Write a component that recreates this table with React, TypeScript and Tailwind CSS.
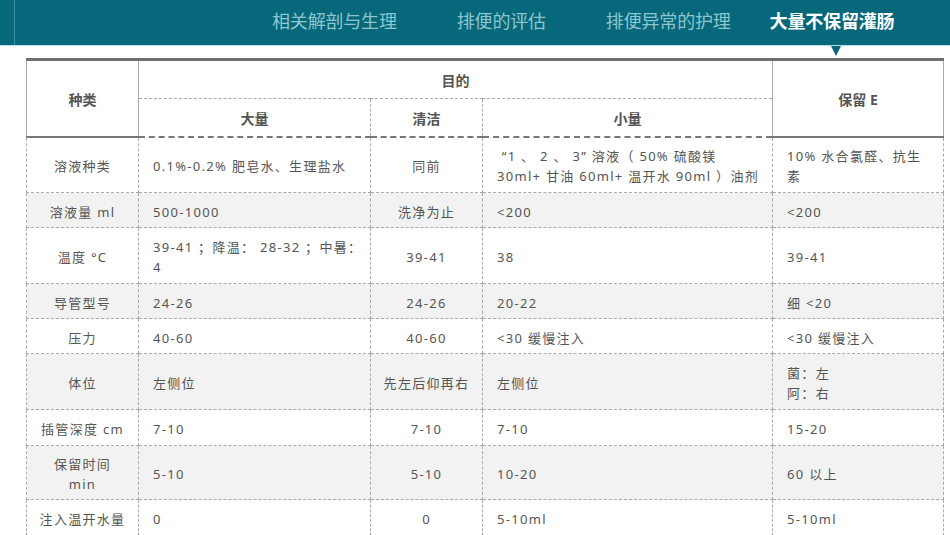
import React from 'react';

const font = { fontFamily: '"Noto Sans", "Noto Sans CJK SC", sans-serif' };

const navItems = [
  { label: '相关解剖与生理', active: false, cls: 'ml-[272px]' },
  { label: '排便的评估', active: false, cls: 'ml-[60px]' },
  { label: '排便异常的护理', active: false, cls: 'ml-[60px]' },
  { label: '大量不保留灌肠', active: true, cls: 'ml-[39px]' },
];

type Row = {
  name: React.ReactNode;
  big: React.ReactNode;
  clean: React.ReactNode;
  small: React.ReactNode;
  keep: React.ReactNode;
  h: string;
  gray?: boolean;
};

const rows: Row[] = [
  {
    name: '溶液种类',
    big: '0.1%-0.2% 肥皂水、生理盐水',
    clean: '同前',
    small: (
      <>
        &nbsp;“1 、 2 、 3” 溶液（ 50% 硫酸镁
        <br />
        30ml+ 甘油 60ml+ 温开水 90ml ）油剂
      </>
    ),
    keep: (
      <>
        10% 水合氯醛、抗生
        <br />
        素
      </>
    ),
    h: 'h-[56px]',
  },
  { name: '溶液量 ml', big: '500-1000', clean: '洗净为止', small: '<200', keep: '<200', h: 'h-[35px]', gray: true },
  {
    name: '温度 °C',
    big: (
      <>
        39-41 ；降温： 28-32 ；中暑：
        <br />4
      </>
    ),
    clean: '39-41',
    small: '38',
    keep: '39-41',
    h: 'h-[56px]',
  },
  { name: '导管型号', big: '24-26', clean: '24-26', small: '20-22', keep: '细 <20', h: 'h-[35px]', gray: true },
  { name: '压力', big: '40-60', clean: '40-60', small: '<30 缓慢注入', keep: '<30 缓慢注入', h: 'h-[35px]' },
  {
    name: '体位',
    big: '左侧位',
    clean: '先左后仰再右',
    small: '左侧位',
    keep: (
      <>
        菌：左
        <br />
        阿：右
      </>
    ),
    h: 'h-[56px]',
    gray: true,
  },
  { name: '插管深度 cm', big: '7-10', clean: '7-10', small: '7-10', keep: '15-20', h: 'h-[36px]' },
  {
    name: (
      <>
        保留时间
        <br />
        min
      </>
    ),
    big: '5-10',
    clean: '5-10',
    small: '10-20',
    keep: '60 以上',
    h: 'h-[54px]',
    gray: true,
  },
  { name: '注入温开水量', big: '0', clean: '0', small: '5-10ml', keep: '5-10ml', h: 'h-[36px]' },
];

const cell =
  'border border-dashed border-[#aaaaaa] text-[13px] leading-[20px] text-[#555555] tracking-[0.1em] align-middle pt-[3px]';
const head = 'font-bold text-[14px] text-[#444444] tracking-normal';

export default function App() {
  return (
    <div className="w-[950px] h-[535px] overflow-hidden bg-white relative" style={font}>
      {/* top navigation */}
      <div className="h-[46px] bg-[#06687a] border-b border-[#b4e0e5] flex items-center pb-[5px] relative">
        <div className="absolute left-[14px] top-0 h-[45px] w-px bg-[#3f8c9a]" />
        {navItems.map((n) => (
          <span
            key={n.label}
            className={`${n.cls} text-[18px] leading-none tracking-[-0.01em] ${n.active ? 'text-white font-bold' : 'text-[#8ec6cf]'}`}
            style={{ fontFamily: '"Noto Sans CJK SC", sans-serif' }}
          >
            {n.label}
          </span>
        ))}
        <div className="absolute left-[831px] top-[46px] w-0 h-0 border-l-[5px] border-r-[5px] border-t-[10px] border-l-transparent border-r-transparent border-t-[#06687a]" />
      </div>

      <div className="pl-[26px] pt-[12px]">
        <table className="border-collapse w-[917px] table-fixed border-t-[3px] border-t-[#6f6f6f]">
          <colgroup>
            <col className="w-[112px]" />
            <col className="w-[232px]" />
            <col className="w-[112px]" />
            <col className="w-[290px]" />
            <col className="w-[171px]" />
          </colgroup>
          <thead>
            <tr className="h-[39px]">
              <th rowSpan={2} className={`${cell} ${head} border-t-0 border-b-2 border-b-[#777777] border-solid`}>
                种类
              </th>
              <th colSpan={3} className={`${cell} ${head} border-t-0`}>
                目的
              </th>
              <th rowSpan={2} className={`${cell} ${head} border-t-0 border-b-2 border-b-[#777777] border-solid`}>
                保留 E
              </th>
            </tr>
            <tr className="h-[38px]">
              <th className={`${cell} ${head} border-b-2 border-b-[#777777]`}>大量</th>
              <th className={`${cell} ${head} border-b-2 border-b-[#777777]`}>清洁</th>
              <th className={`${cell} ${head} border-b-2 border-b-[#777777]`}>小量</th>
            </tr>
          </thead>
          <tbody>
            {rows.map((r, i) => (
              <tr key={i} className={`${r.h} ${r.gray ? 'bg-[#f2f2f2]' : 'bg-white'}`}>
                <td className={`${cell} text-center`}>{r.name}</td>
                <td className={`${cell} pl-[14px]`}>{r.big}</td>
                <td className={`${cell} text-center`}>{r.clean}</td>
                <td className={`${cell} pl-[14px]`}>{r.small}</td>
                <td className={`${cell} pl-[14px]`}>{r.keep}</td>
              </tr>
            ))}
          </tbody>
        </table>
      </div>
    </div>
  );
}
